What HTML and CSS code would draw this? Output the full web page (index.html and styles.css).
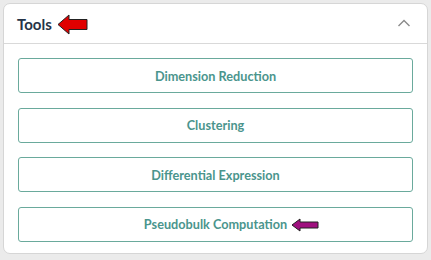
FILE: index.html
```html
<!DOCTYPE html>
<html>
<head>
<meta charset="utf-8">
<link rel="stylesheet" href="styles.css">
</head>
<body>
<div class="card">
  <div class="card-header">
    <div class="title-wrap">
      <span class="title">Tools</span>
      <svg class="arrow-red" width="31" height="21" viewBox="0 0 31 21">
        <polygon points="1,10.5 12,1 12,5.5 30,5.5 30,15.5 12,15.5 12,20" fill="#e00000" stroke="#222" stroke-width="1"/>
      </svg>
    </div>
    <svg class="chevron" width="14" height="10" viewBox="0 0 14 10">
      <polyline points="1.5,8 7,2.5 12.5,8" fill="none" stroke="#8a8a8a" stroke-width="1.4"/>
    </svg>
  </div>
  <div class="card-body">
    <button class="tool-btn">Dimension Reduction</button>
    <button class="tool-btn">Clustering</button>
    <button class="tool-btn">Differential Expression</button>
    <button class="tool-btn"><span class="label">Pseudobulk Computation<svg class="arrow-purple" width="28" height="14" viewBox="0 0 28 14">
        <polygon points="1,7 9,1 9,4 27,4 27,10 9,10 9,13" fill="#a0107f" stroke="#222" stroke-width="1"/>
      </svg></span></button>
  </div>
</div>
</body>
</html>
```

FILE: styles.css
```css
html, body {
  margin: 0;
  padding: 0;
}
body {
  background: #ebebeb;
  width: 431px;
  height: 260px;
  box-sizing: border-box;
  padding: 3px 3px 0 3px;
  font-family: "Lato", "Liberation Sans", sans-serif;
}
.card {
  background: #fff;
  border: 1px solid #d6d6d6;
  border-radius: 7px;
  height: 251px;
  box-sizing: border-box;
  display: flex;
  flex-direction: column;
}
.card-header {
  height: 39px;
  border-bottom: 1px solid #d9d9d9;
  display: flex;
  align-items: center;
  justify-content: space-between;
  padding: 0 16px 0 13px;
  flex-shrink: 0;
}
.title-wrap {
  display: flex;
  align-items: center;
  gap: 5px;
}
.title {
  font-weight: 700;
  font-size: 15px;
  color: #253447;
}
.arrow-red {
  display: block;
  margin-top: 1px;
}
.chevron {
  display: block;
  margin-top: -2px;
}
.card-body {
  padding: 14px 14px 0 14px;
  display: flex;
  flex-direction: column;
  gap: 14.5px;
}
.tool-btn {
  height: 35px;
  background: #fff;
  border: 1px solid #6aaa9c;
  border-radius: 3px;
  color: #4a958d;
  font-family: "Lato", "Liberation Sans", sans-serif;
  font-weight: 700;
  font-size: 12.7px;
  display: flex;
  align-items: center;
  justify-content: center;
  padding: 0;
  margin: 0;
}
.label {
  position: relative;
}
.arrow-purple {
  position: absolute;
  left: 100%;
  top: 50%;
  margin-left: 4px;
  margin-top: -6px;
  display: block;
}
```
